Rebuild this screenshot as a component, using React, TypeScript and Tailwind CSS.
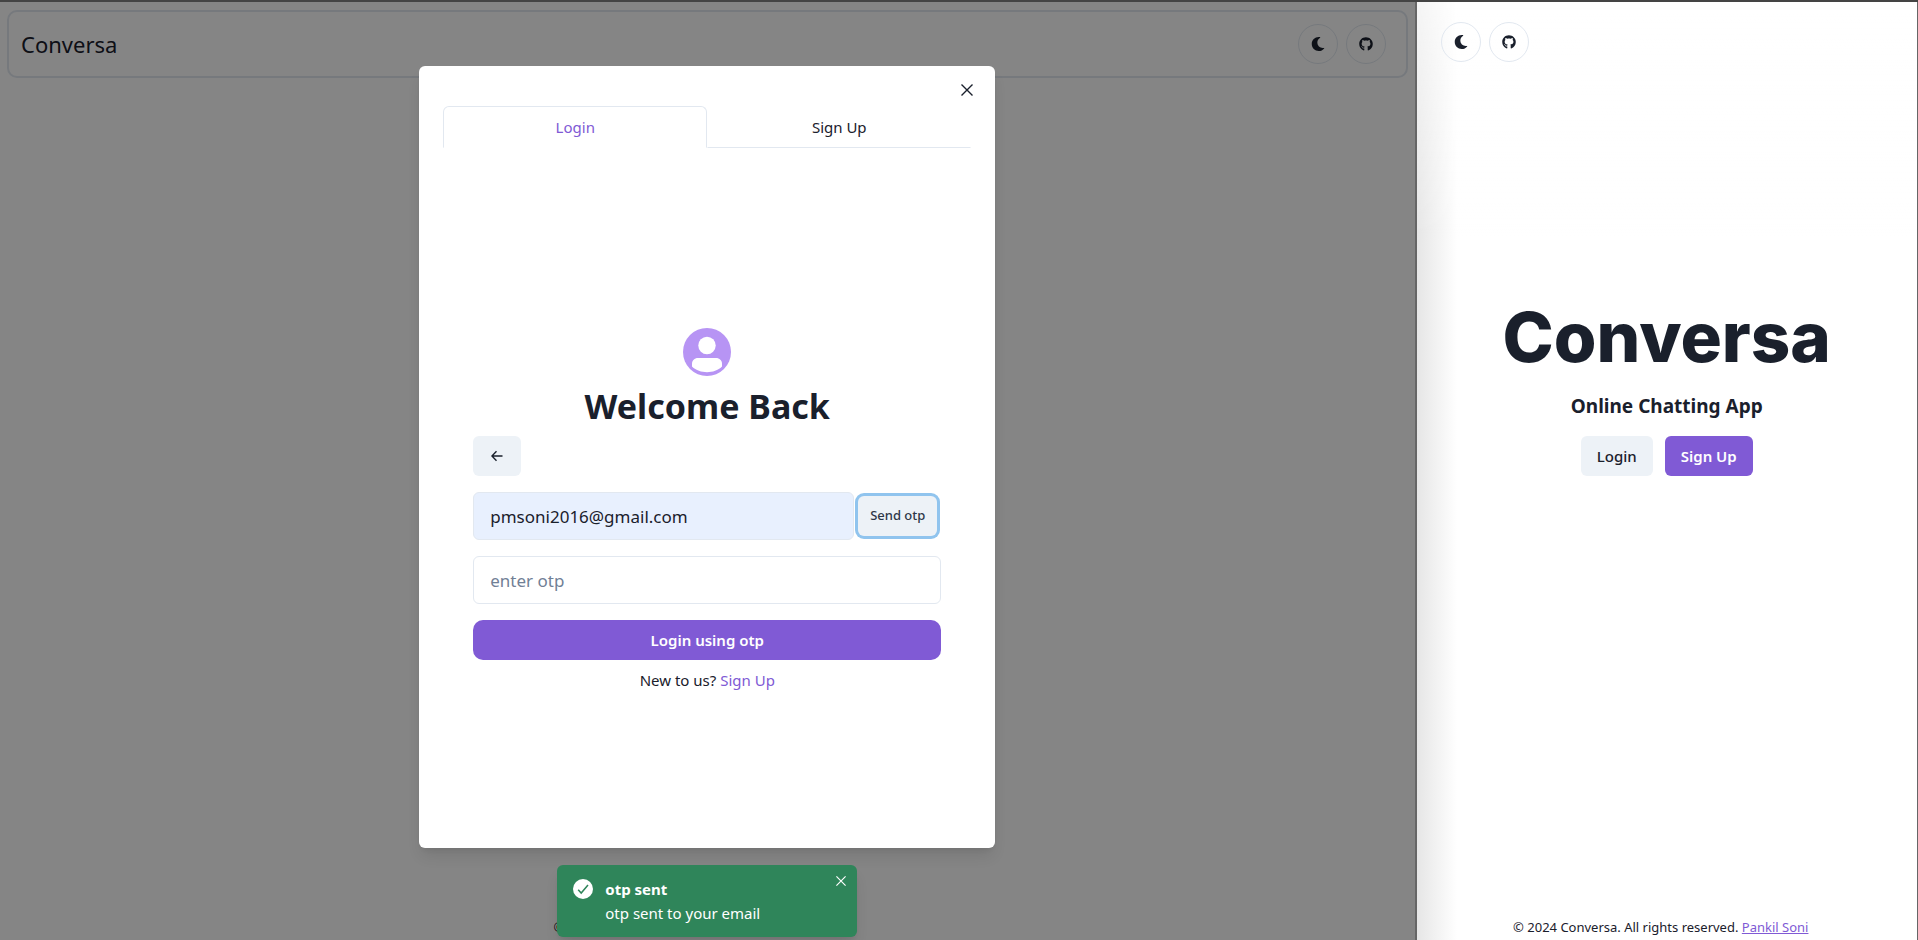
import type { ReactNode } from "react";
import { FaMoon, FaGithub } from "react-icons/fa";

const outlineButton =
  "flex size-10 items-center justify-center rounded-full border border-[#e2e8f0] text-[#1a202c]";

function RoundButtons() {
  return (
    <div className="flex gap-2">
      <button type="button" aria-label="Toggle color mode" className={outlineButton}>
        <FaMoon className="size-[14px]" />
      </button>
      <a href="#github" aria-label="GitHub" className={outlineButton}>
        <FaGithub className="size-[14px]" />
      </a>
    </div>
  );
}

function CloseIcon({ className }: { className: string }) {
  return (
    <svg viewBox="0 0 12 12" className={className} stroke="currentColor" strokeWidth="1.4" aria-hidden="true">
      <path d="M.5 .5l11 11M11.500 .5L.5 11.500" />
    </svg>
  );
}

function Footer() {
  return (
    <footer className="pr-3 pb-1 text-center text-[13px] leading-[18px]">
      © 2024 Conversa. All rights reserved.{" "}
      <a href="#author" className="text-[#805ad5] underline">
        Pankil Soni
      </a>
    </footer>
  );
}

function Tab({ active, children }: { active?: boolean; children: ReactNode }) {
  return (
    <button
      type="button"
      role="tab"
      aria-selected={!!active}
      className={
        active
          ? "h-[42px] flex-1 rounded-t-md border border-[#e2e8f0] border-b-white text-[15px] text-[#805ad5]"
          : "h-[42px] flex-1 border border-transparent border-b-[#e2e8f0] text-[15px]"
      }
    >
      {children}
    </button>
  );
}

function LoginDialog() {
  return (
    <div
      role="dialog"
      aria-label="Login"
      className="relative mt-16 mb-[92px] flex w-full max-w-[576px] flex-col rounded-md bg-white px-6 pt-10 shadow-lg"
    >
      <button type="button" aria-label="Close" className="absolute top-2 right-3 flex size-8 items-center justify-center">
        <CloseIcon className="size-3" />
      </button>
      <div role="tablist" className="flex">
        <Tab active>Login</Tab>
        <Tab>Sign Up</Tab>
      </div>
      <form className="flex flex-1 flex-col justify-center px-[30px] pt-6">
        <svg viewBox="0 0 48 48" className="mx-auto size-12" aria-hidden="true">
          <circle cx="24" cy="24" r="24" fill="#b794f4" />
          <circle cx="24" cy="17.500" r="8.700" fill="#fff" />
          <path d="M15 30h18c3.500 0 6 2.500 6 5.500v3C35 42.500 29.500 44.200 24 44.200S13 42.500 9 38.500v-3C9 32.500 11.500 30 15 30z" fill="#fff" />
        </svg>
        <h2 className="mt-2 text-center text-[34px] leading-[44px] font-bold">Welcome Back</h2>
        <button
          type="button"
          aria-label="Back"
          className="mt-2 flex h-10 w-12 items-center justify-center rounded-md bg-[#edf2f7]"
        >
          <svg viewBox="0 0 12 12" className="size-3" fill="none" stroke="currentColor" strokeWidth="1.400" aria-hidden="true">
            <path d="M11.500 6H1M5.500 1.200L.9 6l4.600 4.800" />
          </svg>
        </button>
        <div className="mt-4 flex items-center gap-1">
          <input
            type="email"
            aria-label="Email"
            defaultValue="pmsoni2016@gmail.com"
            className="h-12 min-w-0 flex-1 rounded-md border border-[#e2e8f0] bg-[#e8f0fe] px-4 text-[17px] outline-none"
          />
          <button
            type="button"
            className="mr-1 h-10 w-[79px] rounded-md bg-[#edf2f7] text-[13px] font-medium text-[#2d3748] ring-3 ring-[#90c4ee]"
          >
            Send otp
          </button>
        </div>
        <input
          type="text"
          aria-label="One-time password"
          placeholder="enter otp"
          className="mt-4 h-12 rounded-md border border-[#e2e8f0] px-4 text-[17px] outline-none placeholder:text-[#718096]"
        />
        <button type="button" className="mt-4 h-10 rounded-[10px] bg-[#805ad5] text-[15px] font-semibold text-white">
          Login using otp
        </button>
        <p className="mt-2 text-center text-[15px] leading-6">
          New to us?{" "}
          <a href="#signup" className="text-[#805ad5]">
            Sign Up
          </a>
        </p>
      </form>
    </div>
  );
}

function Toast() {
  return (
    <div
      role="status"
      className="absolute bottom-[3px] left-1/2 flex w-[300px] -translate-x-1/2 gap-3 rounded-md bg-[#2f855a] px-4 py-3 text-[15px] leading-6 text-white shadow-lg"
    >
      <svg viewBox="0 0 20 20" className="mt-0.5 size-5" aria-hidden="true">
        <circle cx="10" cy="10" r="10" fill="#fff" />
        <path d="M5.200 10.800l3 3.200 6.800-8" fill="none" stroke="#2f855a" strokeWidth="1.500" />
      </svg>
      <div>
        <p className="font-bold">otp sent</p>
        <p>otp sent to your email</p>
      </div>
      <button type="button" aria-label="Dismiss" className="absolute top-1 right-1 flex size-6 items-center justify-center">
        <CloseIcon className="size-[10px]" />
      </button>
    </div>
  );
}

export default function App() {
  return (
    <div className="flex min-h-screen border-t-2 border-[#444] bg-white font-['Noto_Sans','Open_Sans',sans-serif] text-[#1a202c]">
      <main className="relative flex flex-1 flex-col justify-between">
        <header className="mx-[7px] mt-2 flex h-[68px] items-center justify-between rounded-[10px] border-2 border-[#e2e8f0] pr-5 pl-3">
          <h1 className="text-[22px]">Conversa</h1>
          <RoundButtons />
        </header>
        <Footer />
        <div className="absolute inset-0 flex justify-center bg-black/48">
          <LoginDialog />
        </div>
        <Toast />
      </main>
      <aside className="flex w-[26.25%] flex-col border-r border-l-2 border-[#666] bg-[linear-gradient(to_bottom,rgba(255,255,255,0.6),transparent_25%),linear-gradient(to_right,#e6e6e6,white_8%)]">
        <div className="px-6 pt-5">
          <RoundButtons />
        </div>
        <section className="flex flex-1 flex-col items-center pt-[232px]">
          <h2 className="font-['Inter',sans-serif] text-[69px] leading-[86px] font-extrabold">Conversa</h2>
          <p className="mt-3 text-[19px] leading-7 font-bold">Online Chatting App</p>
          <div className="mt-4 flex gap-3">
            <button type="button" className="h-10 rounded-md bg-[#edf2f7] px-4 text-[15px] font-medium">
              Login
            </button>
            <button type="button" className="h-10 rounded-md bg-[#805ad5] px-4 text-[15px] font-semibold text-white">
              Sign Up
            </button>
          </div>
        </section>
        <Footer />
      </aside>
    </div>
  );
}
